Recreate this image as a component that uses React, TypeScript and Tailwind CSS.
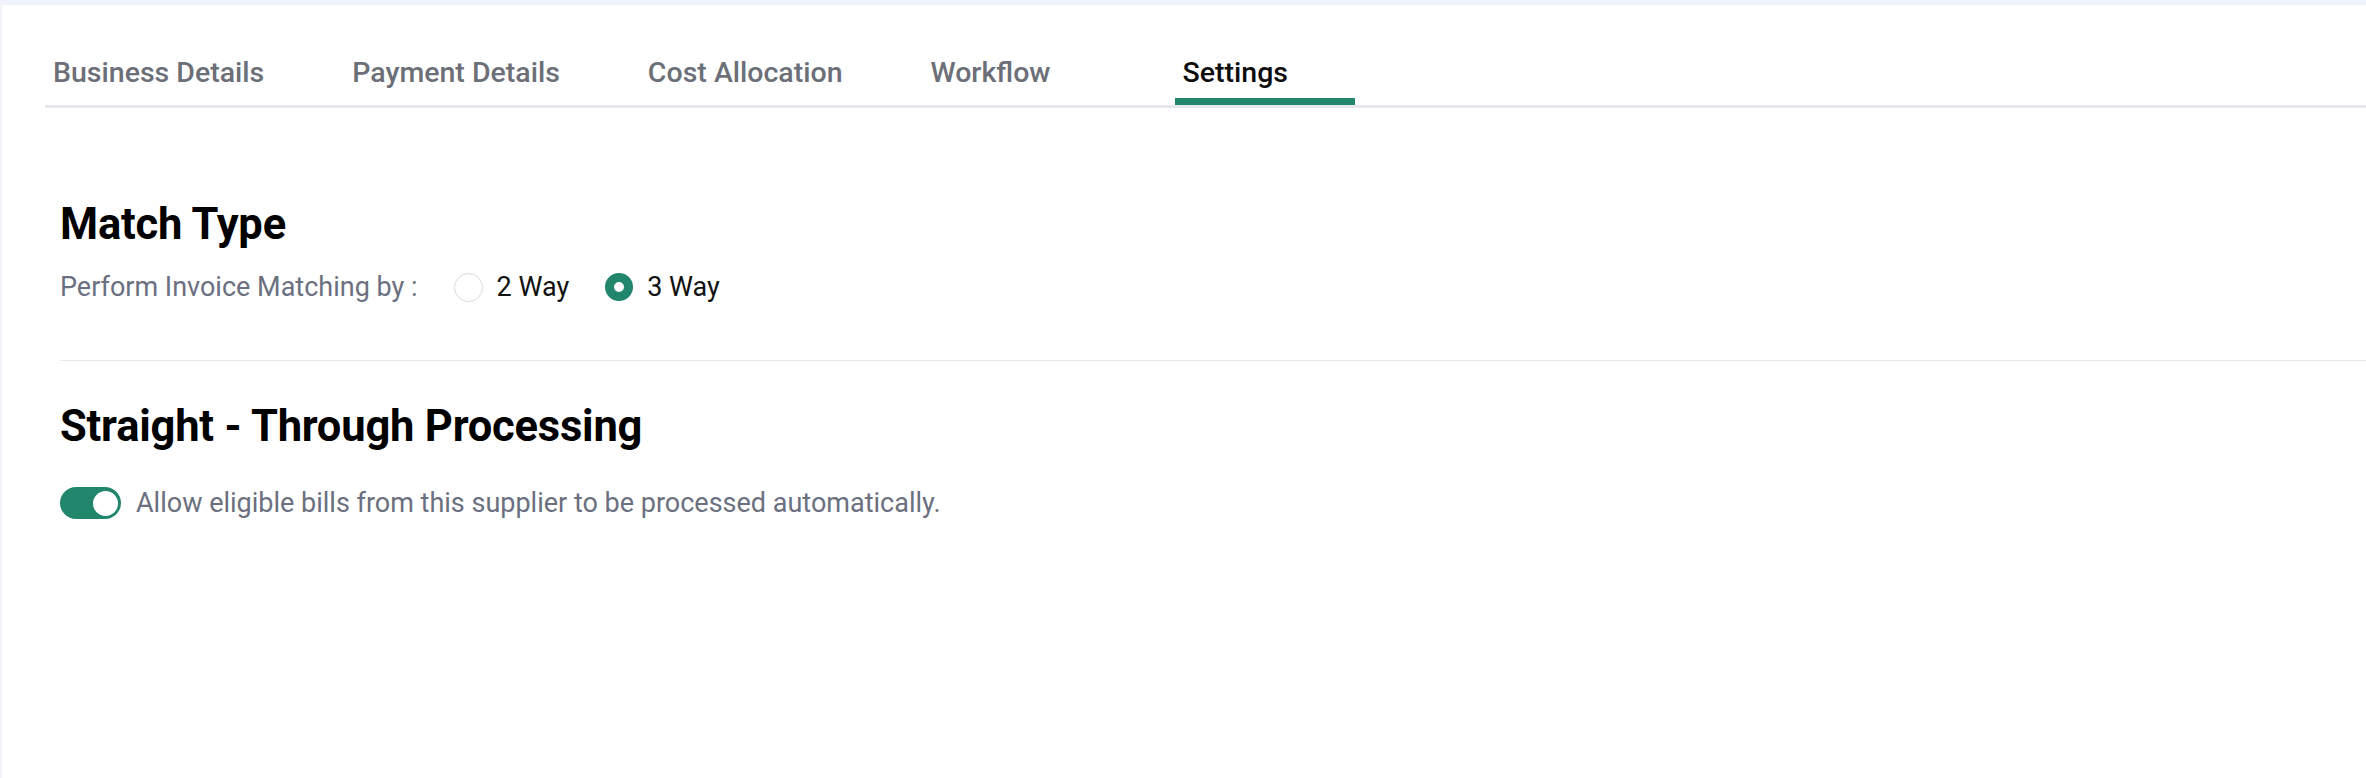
import React, { useState } from "react";

const tabs = ["Business Details", "Payment Details", "Cost Allocation", "Workflow", "Settings"];

function Radio({ checked, label, onClick }: { checked: boolean; label: string; onClick: () => void }) {
  return (
    <button type="button" onClick={onClick} className="flex items-center gap-[14px]">
      {checked ? (
        <span className="h-[28px] w-[28px] rounded-full border-[9.5px] border-[#21866c] bg-white" />
      ) : (
        <span className="h-[29px] w-[29px] rounded-full border-[1.5px] border-[#d9dae0] bg-white" />
      )}
      <span className="text-[27px] leading-[30px] text-[#111111]">{label}</span>
    </button>
  );
}

export default function App() {
  const [active] = useState("Settings");
  const [match, setMatch] = useState("3");
  const [stp, setStp] = useState(true);

  return (
    <div
      className="flex min-h-[778px] w-full bg-[#f0f3f9] pt-[5px] pl-[2px]"
      style={{ fontFamily: "Roboto, 'Liberation Sans', sans-serif" }}
    >
      <div className="flex-1 bg-white pt-[51px] pl-[43px]">
        {/* tab strip */}
        <div className="flex gap-[72px] border-b-[3px] border-[#e6e7eb]">
          {tabs.map((t) => {
            const on = t === active;
            return (
              <div key={t} className="flex min-w-[180px] flex-col">
                <span
                  className={`px-2 text-[28.5px] font-medium leading-[34px] ${
                    on ? "text-[#0d0d0d]" : "text-[#6c6f78]"
                  }`}
                >
                  {t}
                </span>
                <span className={`mt-2 h-[7px] ${on ? "bg-[#21866c]" : "bg-transparent"}`} />
              </div>
            );
          })}
        </div>

        <div className="ml-[15px] pt-[92px]">
          <h2 className="text-[43.5px] font-bold leading-[50px] tracking-[-0.2px] text-black">Match Type</h2>
          <div className="mt-[22px] flex h-[30px] items-center">
            <span className="text-[27px] leading-[30px] text-[#6b7080]">Perform Invoice Matching by :</span>
            <div className="ml-[36px] flex items-center gap-[36px]">
              <Radio checked={match === "2"} label="2 Way" onClick={() => setMatch("2")} />
              <Radio checked={match === "3"} label="3 Way" onClick={() => setMatch("3")} />
            </div>
          </div>

          <div className="mt-[58px] h-px bg-[#e8e9ed]" />

          <h2 className="mt-[41px] text-[43.5px] font-bold leading-[50px] tracking-[-0.2px] text-black">
            Straight - Through Processing
          </h2>
          <div className="mt-[35px] flex h-[32px] items-center">
            <button
              type="button"
              onClick={() => setStp(!stp)}
              className={`flex h-[32px] w-[61px] items-center rounded-full px-[3px] ${
                stp ? "justify-end bg-[#21866c]" : "justify-start bg-[#d4d6dc]"
              }`}
            >
              <span className="h-[25px] w-[25px] rounded-full bg-white" />
            </button>
            <span className="ml-[15px] text-[27px] leading-[32px] text-[#6b7080]">
              Allow eligible bills from this supplier to be processed automatically.
            </span>
          </div>
        </div>
      </div>
    </div>
  );
}
